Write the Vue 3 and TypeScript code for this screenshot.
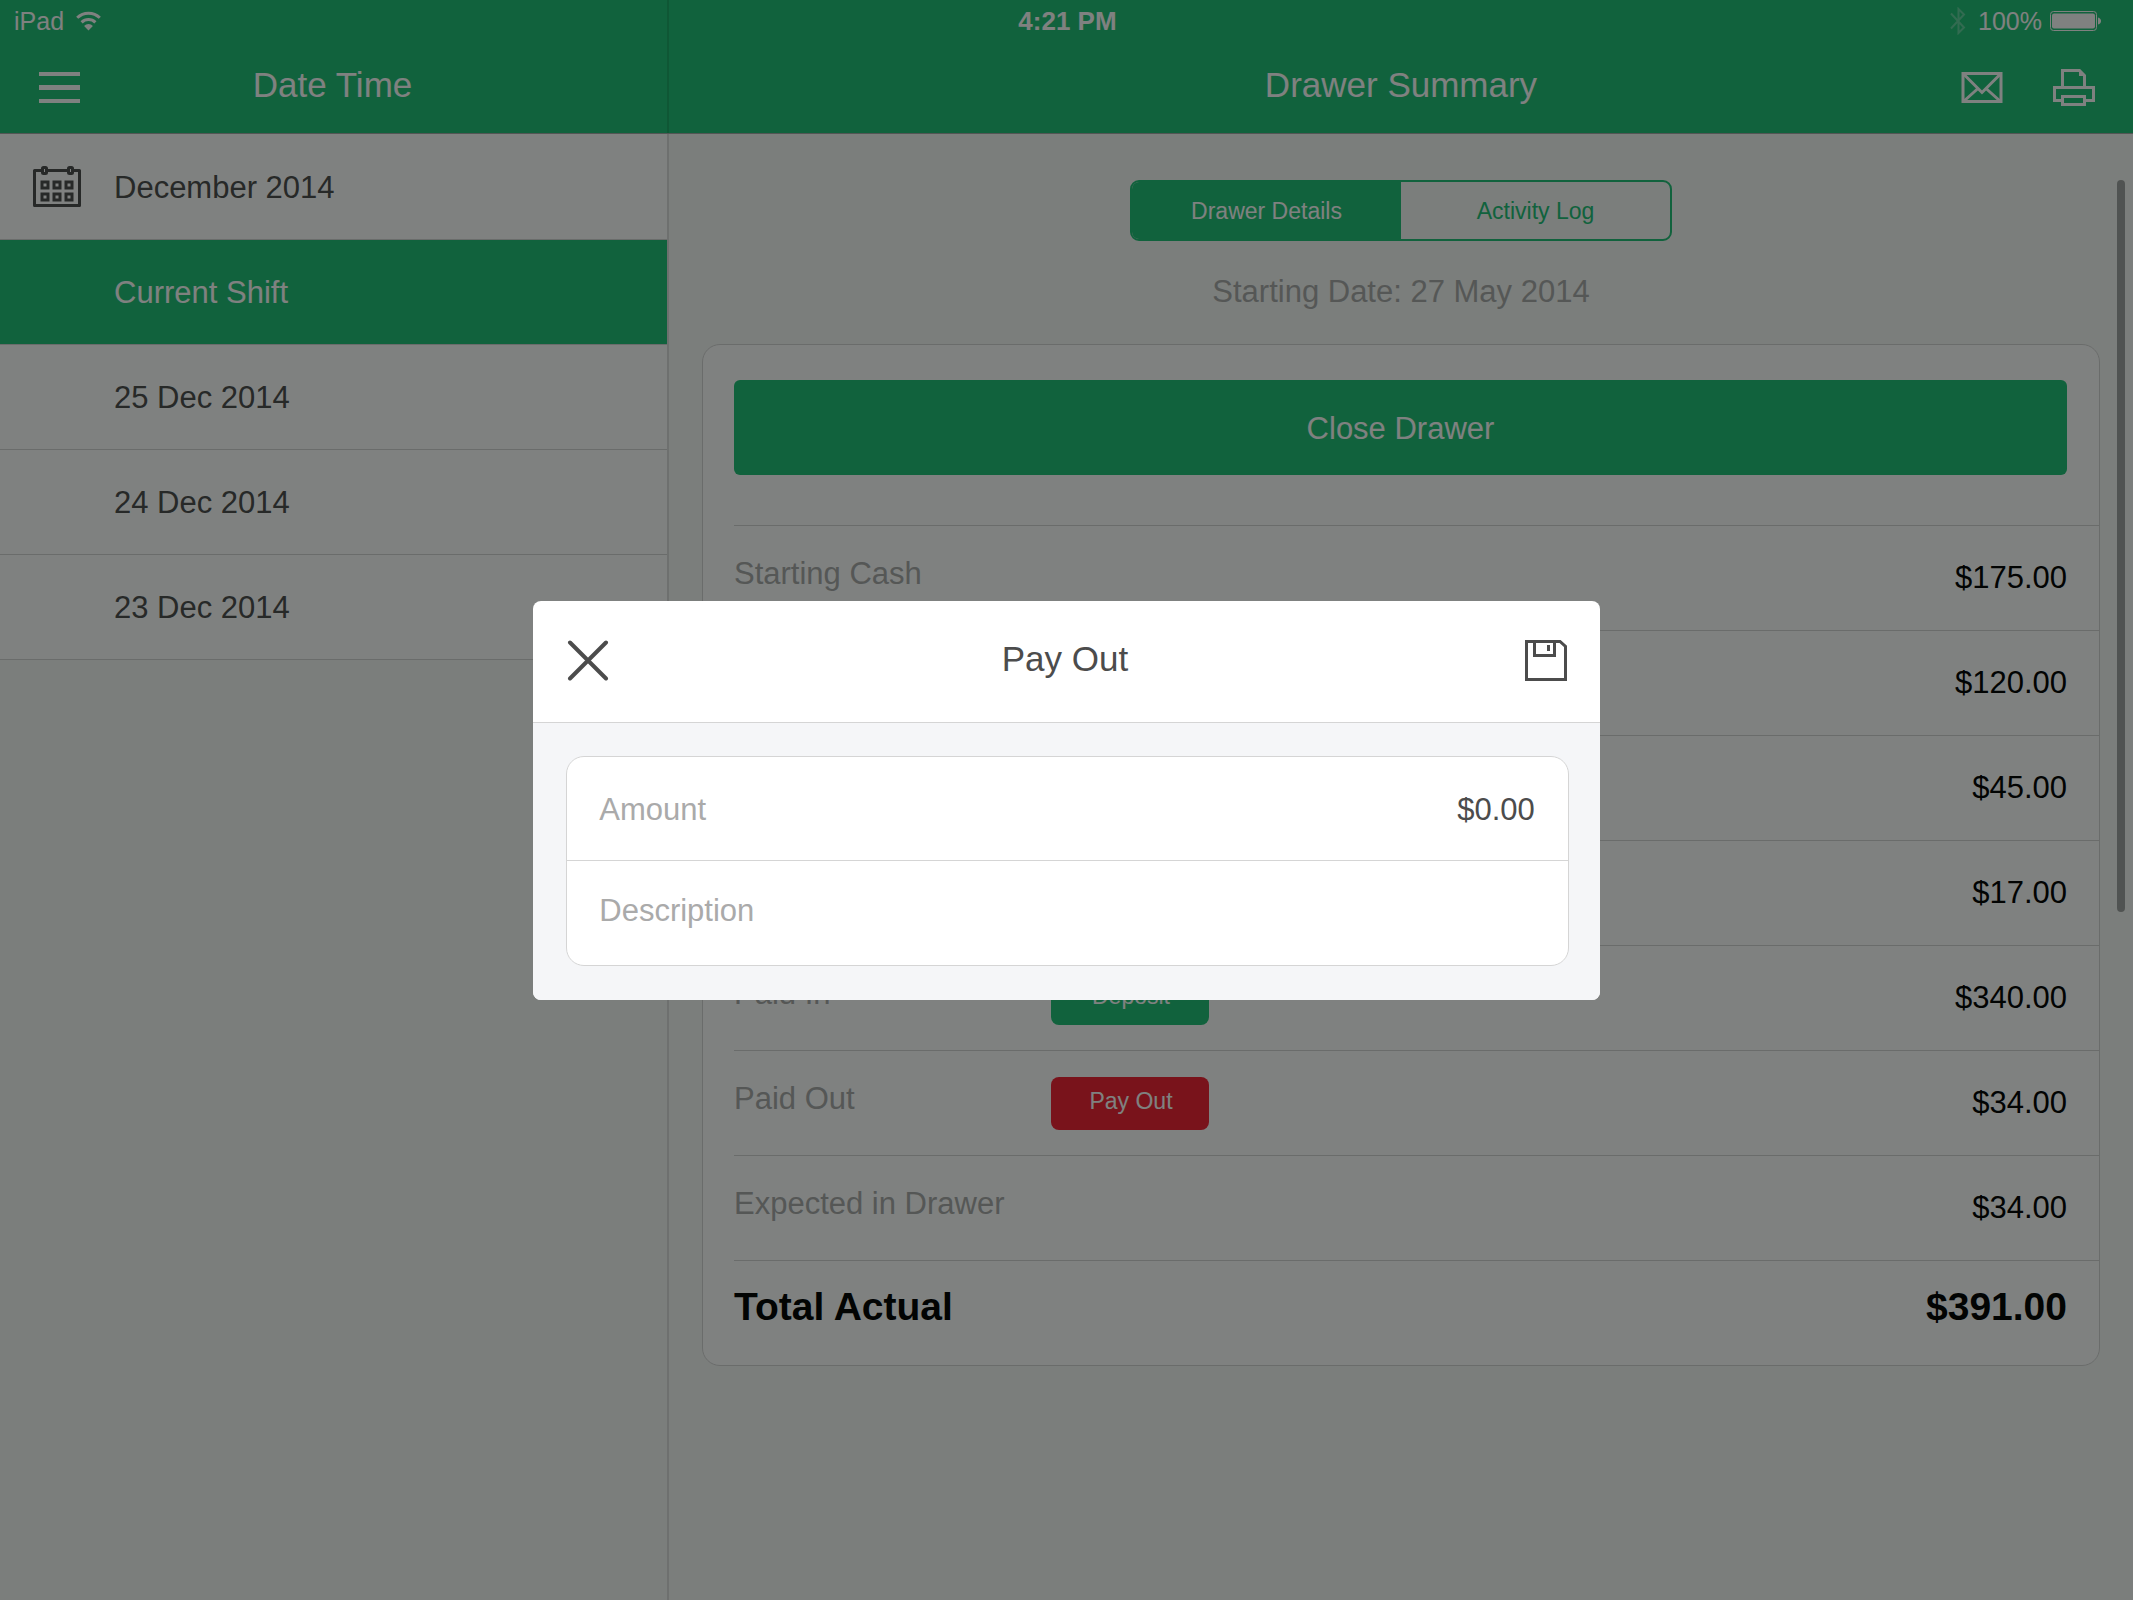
<script setup lang="ts">
import { ref } from 'vue'

interface DrawerLine {
  label?: string
  amount: string
  action?: { text: string; tone: 'green' | 'red' }
  total?: boolean
}

const shifts = ['Current Shift', '25 Dec 2014', '24 Dec 2014', '23 Dec 2014']
const activeShift = ref(0)

const lines: DrawerLine[] = [
  { label: 'Starting Cash', amount: '$175.00' },
  { amount: '$120.00' },
  { amount: '$45.00' },
  { amount: '$17.00' },
  { label: 'Paid In', amount: '$340.00', action: { text: 'Deposit', tone: 'green' } },
  { label: 'Paid Out', amount: '$34.00', action: { text: 'Pay Out', tone: 'red' } },
  { label: 'Expected in Drawer', amount: '$34.00' },
  { label: 'Total Actual', amount: '$391.00', total: true },
]

const amount = ref('$0.00')
const description = ref('')
const calendarCells = [
  [9, 16], [21, 16], [33, 16],
  [9, 28], [21, 28], [33, 28],
]
</script>

<template>
  <div class="app">
    <header class="top">
      <div class="top-divider"></div>
      <div class="status">
        <div class="status-left">
          <span>iPad</span>
          <svg width="25" height="20" viewBox="0 0 25 20" fill="none" stroke="currentColor" stroke-width="3">
            <path d="M1.2 6.8a16 16 0 0 1 22.6 0" />
            <path d="M5.6 11.4a9.8 9.8 0 0 1 13.8 0" />
            <path d="M12.5 19.5l-4.4-4.6a6.2 6.2 0 0 1 8.8 0z" fill="currentColor" stroke="none" />
          </svg>
        </div>
        <div class="status-time">4:21 PM</div>
        <div class="status-right">
          <svg class="bluetooth" width="16" height="28" viewBox="0 0 16 28" fill="none" stroke="currentColor" stroke-width="2">
            <path d="M1 6.500L14 20.500L8.500 26V2L14 7.500L1 21.500" />
          </svg>
          <span>100%</span>
          <svg width="51" height="20" viewBox="0 0 51 20">
            <rect x="0.5" y="0.5" width="46" height="19" rx="3" fill="none" stroke="currentColor" />
            <rect x="2" y="2.500" width="43" height="15" rx="2" fill="currentColor" />
            <path d="M48 6.500q3 1 3 3.500t-3 3.500z" fill="currentColor" />
          </svg>
        </div>
      </div>
      <div class="nav nav-side">
        <button class="icon-btn" type="button" aria-label="Menu">
          <svg width="41" height="31" viewBox="0 0 41 31" fill="currentColor">
            <rect width="41" height="4" />
            <rect y="13" width="41" height="5" />
            <rect y="27" width="41" height="4" />
          </svg>
        </button>
        <h2 class="nav-title">Date Time</h2>
      </div>
      <div class="nav nav-main">
        <h1 class="nav-title">Drawer Summary</h1>
        <div class="nav-actions">
          <button class="icon-btn" type="button" aria-label="Email">
            <svg width="42" height="31" viewBox="0 0 42 31" fill="none" stroke="currentColor" stroke-width="3">
              <rect x="2" y="1.500" width="38" height="28" />
              <path d="M3 2.500L21 20.500L39 2.500M3 29L17 16.500M39 29L25 16.500" />
            </svg>
          </button>
          <button class="icon-btn" type="button" aria-label="Print">
            <svg width="42" height="37" viewBox="0 0 42 37" fill="none" stroke="currentColor" stroke-width="3">
              <path d="M9.500 18V1.500H26.500L31.500 6.500V18" />
              <path d="M27 2V6H32" stroke-width="2" />
              <path d="M9 31.500H1.500V18.500H40.500V31.500H33" />
              <rect x="9.500" y="27.500" width="22" height="8" />
            </svg>
          </button>
        </div>
      </div>
    </header>

    <div class="body">
      <aside class="side">
        <button class="month" type="button">
          <svg width="48" height="41" viewBox="0 0 48 41" fill="none" stroke="currentColor" stroke-width="3">
            <path d="M9 4.500H1.500V39.500H46.500V4.500H40M15 4.500H34" stroke-linejoin="round" />
            <rect x="9.500" y="1.500" width="4" height="6" rx="1" />
            <rect x="35.500" y="1.500" width="4" height="6" rx="1" />
            <rect v-for="([x, y], i) in calendarCells" :key="i" :x="x" :y="y" width="6" height="6" />
          </svg>
          <span>December 2014</span>
        </button>
        <ul class="shifts">
          <li v-for="(shift, i) in shifts" :key="shift">
            <button type="button" class="shift" :class="{ active: i === activeShift }" @click="activeShift = i">
              {{ shift }}
            </button>
          </li>
        </ul>
      </aside>

      <main class="main">
        <div class="segmented">
          <button type="button" class="segment selected">Drawer Details</button>
          <button type="button" class="segment">Activity Log</button>
        </div>
        <p class="starting">Starting Date: 27 May 2014</p>

        <section class="card">
          <button type="button" class="close-drawer">Close Drawer</button>
          <table class="lines">
            <colgroup>
              <col class="col-label" />
              <col />
              <col class="col-amount" />
            </colgroup>
            <tbody>
              <tr v-for="(line, i) in lines" :key="i" :class="{ total: line.total }">
                <th scope="row">{{ line.label }}</th>
                <td>
                  <button v-if="line.action" type="button" class="pill" :class="line.action.tone">
                    {{ line.action.text }}
                  </button>
                </td>
                <td class="amount">{{ line.amount }}</td>
              </tr>
            </tbody>
          </table>
        </section>
        <div class="scroll-thumb"></div>
      </main>
    </div>

    <div class="overlay">
      <form class="modal" role="dialog" aria-labelledby="modal-title" @submit.prevent>
        <div class="modal-head">
          <button class="icon-btn" type="button" aria-label="Close">
            <svg width="42" height="41" viewBox="0 0 42 41" fill="none" stroke="currentColor" stroke-width="4" stroke-linecap="round">
              <path d="M3 2.500L39 38.500M39 2.500L3 38.500" />
            </svg>
          </button>
          <h2 id="modal-title">Pay Out</h2>
          <button class="icon-btn" type="submit" aria-label="Save">
            <svg width="42" height="41" viewBox="0 0 42 41" fill="none" stroke="currentColor" stroke-width="3">
              <path d="M1.500 1.500H35L40.500 6.500V39.500H1.500Z" />
              <path d="M9.500 2V15.500H29.500V2" />
              <path d="M23.500 5V11" />
            </svg>
          </button>
        </div>
        <div class="modal-body">
          <div class="fields">
            <div class="field field-amount">
              <label for="amount">Amount</label>
              <input id="amount" v-model="amount" type="text" />
            </div>
            <div class="field field-description">
              <label for="description">Description</label>
              <input id="description" v-model="description" type="text" />
            </div>
          </div>
        </div>
      </form>
    </div>
  </div>
</template>

<style>
body {
  margin: 0;
}
</style>

<style scoped>
.app {
  --green: #20c176;
  --red: #f21f31;
  --line: #d5d5d5;
  --ink: #4c4c4c;
  --muted: #aaaaaa;
  display: flex;
  flex-direction: column;
  min-height: 100vh;
  background: #f7f8f6;
  color: var(--ink);
  font-family: "Liberation Sans", Arial, Helvetica, sans-serif;
  font-size: 31px;
}

*,
*::before {
  box-sizing: border-box;
}

button,
input {
  margin: 0;
  padding: 0;
  border: 0;
  background: none;
  color: inherit;
  font: inherit;
}

h1,
h2 {
  margin: 0;
  font-size: 35px;
  font-weight: 400;
}

svg {
  display: block;
  flex: none;
}

.top,
.body {
  display: grid;
  grid-template-columns: 669fr 1464fr;
}

.top {
  grid-template-rows: 42px 91px;
  border-bottom: 1px solid #a5a8a7;
  background: var(--green);
  color: #fff;
}

.top-divider {
  grid-area: 1 / 1 / 3 / 2;
  border-right: 2px solid #1ba967;
}

.status {
  grid-area: 1 / 1 / 2 / 3;
  display: grid;
  grid-template-columns: 1fr auto 1fr;
  align-items: center;
  padding: 0 32px 0 14px;
  font-size: 25px;
}

.status-left,
.status-right {
  display: flex;
  align-items: center;
  gap: 12px;
}

.status-right {
  justify-content: flex-end;
  gap: 8px;
}

.status-time {
  padding-left: 20px;
  font-size: 26px;
  font-weight: 700;
}

.bluetooth {
  margin-right: 4px;
  opacity: 0.3;
}

.nav {
  display: grid;
  align-items: center;
}

.nav-side {
  grid-area: 2 / 1;
  grid-template-columns: 41px 1fr 41px;
  padding: 0 43px 0 39px;
}

.nav-main {
  grid-area: 2 / 2;
  grid-template-columns: 1fr auto 1fr;
  padding: 0 38px;
}

.nav-title {
  padding-bottom: 6px;
  text-align: center;
}

.nav-main .nav-title {
  grid-column: 2;
}

.nav-actions {
  display: flex;
  align-items: center;
  justify-content: flex-end;
  gap: 50px;
}

.body {
  flex: 1;
}

.side {
  border-right: 2px solid #dcdcdc;
}

.month,
.shift {
  display: flex;
  align-items: center;
  width: 100%;
  height: 105px;
  border-bottom: 1px solid var(--line);
  background: #fff;
}

.month {
  gap: 33px;
  height: 106px;
  padding-left: 33px;
}

.month span,
.shift {
  padding-top: 2px;
}

.shifts {
  margin: 0;
  padding: 0;
  list-style: none;
}

.shift {
  padding-left: 114px;
}

.shift.active {
  background: var(--green);
  color: #fff;
}

.main {
  position: relative;
  padding: 46px 33px 60px;
}

.segmented {
  display: grid;
  grid-template-columns: 1fr 1fr;
  width: 542px;
  height: 61px;
  margin: 0 auto;
  overflow: hidden;
  border: 2px solid var(--green);
  border-radius: 9px;
  font-size: 23px;
}

.segment {
  padding-top: 2px;
  color: var(--green);
}

.segment.selected {
  background: var(--green);
  color: #fff;
}

.starting {
  margin: 31px 0 32px;
  color: var(--muted);
  line-height: 40px;
  text-align: center;
}

.card {
  padding: 35px 0 0 31px;
  border: 1px solid var(--line);
  border-radius: 18px;
  background: #fff;
}

.close-drawer {
  display: block;
  width: calc(100% - 32px);
  height: 95px;
  margin-bottom: 50px;
  padding-top: 2px;
  border-radius: 6px;
  background: var(--green);
  color: #fff;
}

.lines {
  width: 100%;
  border-spacing: 0;
  table-layout: fixed;
}

.col-label {
  width: 317px;
}

.col-amount {
  width: 300px;
}

.lines th,
.lines td {
  height: 105px;
  padding: 0;
  border-top: 1px solid var(--line);
  text-align: left;
  vertical-align: middle;
}

.lines th {
  padding-bottom: 8px;
  color: var(--muted);
  font-weight: 400;
  white-space: nowrap;
}

.lines .amount {
  padding-right: 32px;
  color: #000;
  text-align: right;
}

.lines .total th,
.lines .total td {
  padding-bottom: 12px;
  color: #000;
  font-size: 39px;
  font-weight: 700;
}

.pill {
  display: block;
  width: 158px;
  height: 53px;
  padding: 0 0 3px 2px;
  border-radius: 8px;
  color: #fff;
  font-size: 23px;
}

.pill.green {
  background: var(--green);
}

.pill.red {
  background: var(--red);
}

.scroll-thumb {
  position: absolute;
  top: 46px;
  right: 8px;
  width: 8px;
  height: 732px;
  border-radius: 4px;
  background: #a0a2a1;
}

.overlay {
  position: fixed;
  inset: 0;
  display: flex;
  align-items: center;
  justify-content: center;
  background: rgba(3, 7, 6, 0.51);
}

.modal {
  width: 50%;
  overflow: hidden;
  border-radius: 8px;
  background: #fff;
}

.modal-head {
  display: grid;
  grid-template-columns: 42px 1fr 42px;
  align-items: center;
  height: 122px;
  padding: 0 33px 2px 34px;
  border-bottom: 1px solid var(--line);
  text-align: center;
}

.modal-head h2 {
  padding: 0 4px 2px 0;
}

.modal-body {
  padding: 33px 31px 34px 33px;
  background: #f5f6f8;
}

.fields {
  border: 1px solid var(--line);
  border-radius: 18px;
  background: #fff;
}

.field {
  display: flex;
  align-items: center;
  justify-content: space-between;
  height: 104px;
  padding: 0 33px 0 32px;
}

.field-amount {
  padding-top: 4px;
  border-bottom: 1px solid var(--line);
}

.field-description {
  padding-bottom: 4px;
}

.field label {
  color: var(--muted);
}

.field input {
  flex: 1;
  min-width: 0;
  outline: 0;
  text-align: right;
}
</style>
